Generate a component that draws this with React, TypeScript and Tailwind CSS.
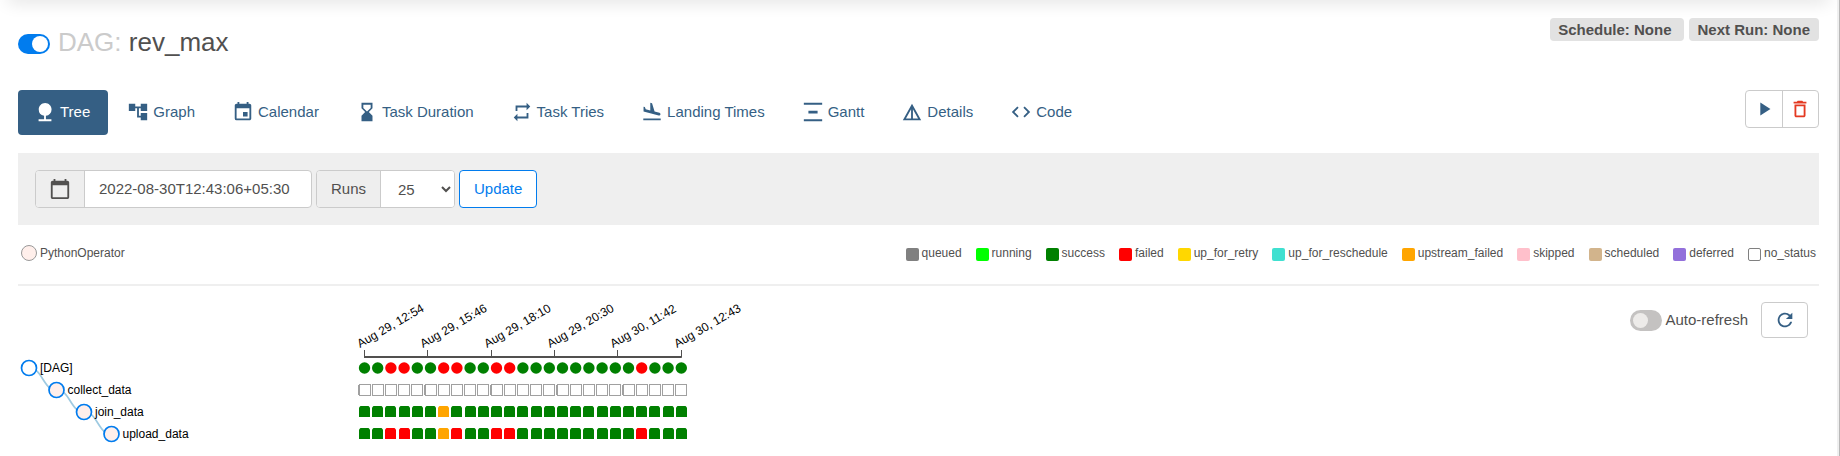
import type { ReactNode } from "react";
import type { IconType } from "react-icons";
import {
  MdAccountTree,
  MdCalendarToday,
  MdCode,
  MdDeleteOutline,
  MdDetails,
  MdEvent,
  MdFlightLand,
  MdHourglassBottom,
  MdNature,
  MdPlayArrow,
  MdRefresh,
  MdRepeat,
  MdVerticalDistribute,
} from "react-icons/md";

const tabs: { label: string; icon: IconType }[] = [
  { label: "Tree", icon: MdNature },
  { label: "Graph", icon: MdAccountTree },
  { label: "Calendar", icon: MdEvent },
  { label: "Task Duration", icon: MdHourglassBottom },
  { label: "Task Tries", icon: MdRepeat },
  { label: "Landing Times", icon: MdFlightLand },
  { label: "Gantt", icon: MdVerticalDistribute },
  { label: "Details", icon: MdDetails },
  { label: "Code", icon: MdCode },
];

const states = [
  { label: "queued", swatch: "bg-[#808080]" },
  { label: "running", swatch: "bg-[#00ff00]" },
  { label: "success", swatch: "bg-[#008000]" },
  { label: "failed", swatch: "bg-[#ff0000]" },
  { label: "up_for_retry", swatch: "bg-[#ffd700]" },
  { label: "up_for_reschedule", swatch: "bg-[#40e0d0]" },
  { label: "upstream_failed", swatch: "bg-[#ffa500]" },
  { label: "skipped", swatch: "bg-[#ffc0cb]" },
  { label: "scheduled", swatch: "bg-[#d2b48c]" },
  { label: "deferred", swatch: "bg-[#9370db]" },
  { label: "no_status", swatch: "border border-[#808080] bg-white" },
];

/* One letter per run: s = success, f = failed, u = upstream failed, n = no status */
const rows = [
  { label: "[DAG]", runs: "ssffssffssffsssssssssfsss" },
  { label: "collect_data", runs: "nnnnnnnnnnnnnnnnnnnnnnnnn" },
  { label: "join_data", runs: "ssssssussssssssssssssssss" },
  { label: "upload_data", runs: "ssffssufssffsssssssssfsss" },
];

const stateColor: Record<string, string> = {
  s: "#008000",
  f: "#ff0000",
  u: "#ffa500",
};

const ticks = [
  "Aug 29, 12:54",
  "Aug 29, 15:46",
  "Aug 29, 18:10",
  "Aug 29, 20:30",
  "Aug 30, 11:42",
  "Aug 30, 12:43",
];

const RUN_X = 346.5;
const RUN_STEP = 13.2;
const ROW_Y = 82;
const ROW_STEP = 22;
const NODE_X = 11;
const NODE_STEP = 27.5;

function Badge({ children, className = "" }: { children: ReactNode; className?: string }) {
  return (
    <span className={`rounded bg-[#e2e2e2] px-[9px] text-[15px] leading-[23px] font-bold text-[#51504f] ${className}`}>
      {children}
    </span>
  );
}

function RunMark({ run, index, y, isDag }: { run: string; index: number; y: number; isDag: boolean }) {
  const cx = RUN_X + RUN_STEP * index;
  if (isDag) {
    return <circle cx={cx} cy={y} r="5.7" fill={stateColor[run]} />;
  }
  if (run === "n") {
    const edge = Math.floor(cx - 5.5);
    return (
      <g stroke="#a0a0a0" fill="#fff">
        <rect x={edge + 0.5} y={y - 5.5} width="11" height="11" />
        {index % 5 === 0 && <path d={`M${edge - 0.5} ${y - 5}V${y + 5}`} />}
      </g>
    );
  }
  const left = Math.round(cx - 5.5);
  return (
    <path
      d={`M${left} ${y + 5}V${y - 4.5}L${left + 1.5} ${y - 6}H${left + 9.5}L${left + 11} ${y - 4.5}V${y + 5}Z`}
      fill={stateColor[run]}
    />
  );
}

function TreeChart() {
  const lastX = RUN_X + RUN_STEP * 24;
  return (
    <svg width="760" height="168" className="block" role="img" aria-label="Task runs">
      {rows.slice(1).map((row, i) => {
        const x = NODE_X + NODE_STEP * i;
        const y = ROW_Y + ROW_STEP * i;
        const mx = x + NODE_STEP / 2;
        return (
          <path
            key={row.label}
            d={`M${x} ${y}C${mx} ${y} ${mx} ${y + ROW_STEP} ${x + NODE_STEP} ${y + ROW_STEP}`}
            fill="none"
            stroke="#9ecae1"
            strokeWidth="1.7"
          />
        );
      })}
      {rows.map((row, i) => {
        const x = NODE_X + NODE_STEP * i;
        const y = ROW_Y + ROW_STEP * i;
        return (
          <g key={row.label}>
            <circle cx={x} cy={y} r="7.5" fill={i ? "#ffefeb" : "#fff"} stroke="#017cee" strokeWidth="1.7" />
            <text x={x + 11} y={y + 4} fontSize="12" fill="#000">
              {row.label}
            </text>
            {[...row.runs].map((run, n) => (
              <RunMark key={n} run={run} index={n} y={y} isDag={i === 0} />
            ))}
          </g>
        );
      })}
      <path d={`M${RUN_X - 0.5} 71H${lastX + 0.5}`} stroke="#51504f" strokeWidth="2" />
      {ticks.map((tick, i) => {
        const x = Math.floor(RUN_X + ((lastX - RUN_X) / 5) * i) + 0.5;
        return (
          <g key={tick}>
            <path d={`M${x} 64V71`} stroke="#51504f" />
            <text fontSize="12" fill="#000" transform={`translate(${x - 4.5} 62) rotate(-30)`}>
              {tick}
            </text>
          </g>
        );
      })}
    </svg>
  );
}

export default function App() {
  return (
    <div className="min-h-screen border-r border-[#b8b8b8] bg-white font-['Liberation_Sans',Arial,sans-serif] text-[15px] leading-5 text-[#51504f]">
      <div className="min-h-screen overflow-hidden border-r-2 border-[#efefef]">
        <div className="mx-2 -mt-2 h-2 shadow-[0_0_18px_rgba(0,0,0,0.2)]" />
        <main className="px-[18px]">
          <header className="flex items-start justify-between pt-[18px]">
            <h1 className="mt-2 flex items-center gap-2 text-[26px] leading-8">
              <label className="mt-[3px] inline-flex cursor-pointer">
                <input type="checkbox" defaultChecked aria-label="Pause or unpause DAG" className="sr-only" />
                <span className="h-5 w-8 rounded-full bg-[#017cee] py-[2px] pr-[2px] pl-[14px]">
                  <span className="block size-4 rounded-full bg-white" />
                </span>
              </label>
              <span>
                <span className="text-[#cbcbcb]">DAG:</span> rev_max
              </span>
            </h1>
            <div className="flex gap-[5px]">
              <Badge className="pr-3 pl-2">Schedule: None</Badge>
              <Badge>Next Run: None</Badge>
            </div>
          </header>

          <div className="mt-8 flex items-start justify-between">
            <nav className="flex gap-[3px]">
              {tabs.map(({ label, icon: Icon }, i) => (
                <a
                  key={label}
                  href={`#${label.toLowerCase().replace(" ", "-")}`}
                  className={`flex h-[45px] items-center gap-1 rounded pr-[18px] pb-[2px] pl-4 ${
                    i === 0 ? "bg-[#355f84] text-white" : "text-[#355f84]"
                  }`}
                >
                  <Icon className="size-[22px]" />
                  {label}
                </a>
              ))}
            </nav>
            <div className="flex h-[38px] w-[74px] divide-x divide-[#cbcbcb] rounded border border-[#cbcbcb]">
              <button type="button" aria-label="Trigger DAG" className="flex flex-1 items-center justify-center text-[#355f84]">
                <MdPlayArrow className="size-[22px]" />
              </button>
              <button type="button" aria-label="Delete DAG" className="flex flex-1 items-center justify-center text-[#e43921]">
                <MdDeleteOutline className="size-[22px]" />
              </button>
            </div>
          </div>

          <form className="mt-[18px] flex gap-1 bg-[#efefef] p-[17px]">
            <div className="flex h-[38px] overflow-hidden rounded border border-[#cbcbcb] bg-white">
              <label htmlFor="base-date" aria-label="Base date" className="flex w-[49px] items-center justify-center border-r border-[#cbcbcb] bg-[#eee]">
                <MdCalendarToday className="size-[22px]" />
              </label>
              <input id="base-date" type="text" defaultValue="2022-08-30T12:43:06+05:30" className="w-[226px] px-[14px] outline-none" />
            </div>
            <div className="flex h-[38px] overflow-hidden rounded border border-[#cbcbcb] bg-white">
              <label htmlFor="num-runs" className="flex w-16 items-center justify-center border-r border-[#cbcbcb] bg-[#eee]">
                Runs
              </label>
              <select id="num-runs" defaultValue="25" className="w-[73px] bg-white pl-[13px] outline-none">
                <option>5</option>
                <option>25</option>
                <option>50</option>
                <option>100</option>
              </select>
            </div>
            <button type="button" className="h-[38px] rounded border border-[#017cee] bg-white px-[14px] text-[#017cee]">
              Update
            </button>
          </form>

          <div className="mt-[18px] flex items-center justify-between px-[3px] text-[12px] leading-5">
            <div className="flex items-center gap-[3px]">
              <span className="size-4 rounded-full border border-[#999] bg-[#ffefeb]" />
              PythonOperator
            </div>
            <ul className="flex gap-[14px]">
              {states.map(({ label, swatch }) => (
                <li key={label} className="flex items-center gap-[3px]">
                  <span className={`mt-[2px] size-[13px] rounded-[2px] ${swatch}`} />
                  {label}
                </li>
              ))}
            </ul>
          </div>

          <hr className="mt-[21px] border-t-2 border-[#efefef]" />

          <div className="flex items-start justify-between">
            <TreeChart />
            <div className="mt-4 mr-[11px] flex items-center gap-[13px]">
              <label className="flex cursor-pointer items-center gap-[3px]">
                <input type="checkbox" className="sr-only" />
                <span className="h-[21px] w-8 rounded-full bg-[#c4c2c1] p-[3px]">
                  <span className="block size-[15px] rounded-full bg-[#edebe9]" />
                </span>
                Auto-refresh
              </label>
              <button type="button" aria-label="Refresh" className="flex h-9 w-[47px] items-center justify-center rounded border border-[#cbcbcb] text-[#355f84]">
                <MdRefresh className="size-[22px]" />
              </button>
            </div>
          </div>
        </main>
      </div>
    </div>
  );
}
